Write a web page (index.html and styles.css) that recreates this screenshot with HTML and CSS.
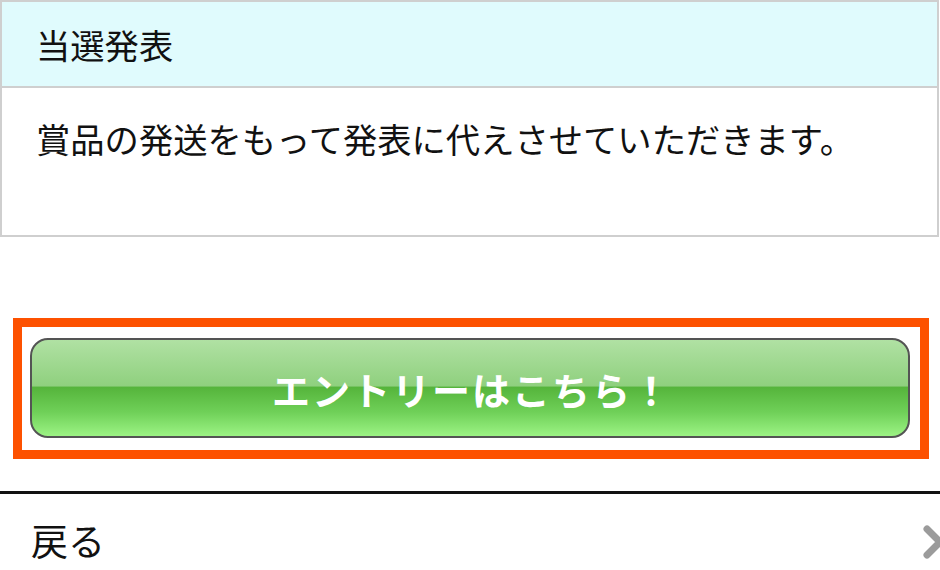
FILE: index.html
```html
<!DOCTYPE html>
<html lang="ja">
<head>
    <meta charset="UTF-8">
    <meta name="viewport" content="width=device-width, initial-scale=1.0">
    <title>当選発表</title>
    <link rel="stylesheet" href="styles.css">
</head>
<body>
    <div class="page">
        <!-- 当選発表 -->
        <div class="info-box">
            <div class="info-head">当選発表</div>
            <div class="info-body">賞品の発送をもって発表に代えさせていただきます。</div>
        </div>

        <!-- Entry button -->
        <div class="entry-frame">
            <a class="entry-btn" href="#">エントリーはこちら！</a>
        </div>

        <!-- Back link -->
        <a class="back-row" href="#">
            <span class="back-label">戻る</span>
            <svg class="chevron" width="24" height="34" viewBox="0 0 24 34">
                <polyline points="5,4 18,17 5,30" fill="none" stroke="#9b9b9b" stroke-width="7" stroke-linecap="round" stroke-linejoin="round"/>
            </svg>
        </a>
    </div>
</body>
</html>
```

FILE: styles.css
```css
* { box-sizing: border-box; margin: 0; padding: 0; }
body { font-family: "Noto Sans CJK JP", "Noto Sans", sans-serif; background: #fff; color: #111; width: 940px; overflow: hidden; }
.page { display: flex; flex-direction: column; }
.info-box { width: 939px; border: 2px solid #cfcfcf; }
.info-head { height: 86px; line-height: 84px; padding-left: 34px; background: #e0fbfd; border-bottom: 2px solid #cfcfcf; font-size: 34.3px; font-weight: 400; }
.info-body { height: 147px; padding: 26px 34px 0; line-height: 48px; font-size: 34.3px; }
.entry-frame { margin: 81px 0 0 13px; width: 916px; height: 141px; border: 9px solid #fd5100; padding: 11px 10px 12px 8px; background: #fff; }
.entry-btn { display: flex; align-items: center; justify-content: center; height: 100%; padding-left: 4px; border: 2px solid #545454; border-radius: 18px; color: #fff; text-decoration: none; font-size: 38px; font-weight: 700; letter-spacing: 2px; background: linear-gradient(to bottom, #b0e1a3 0%, #8fd07e 48%, #55b43b 49%, #6fd058 75%, #9cf384 100%); }
.back-row { display: flex; align-items: center; justify-content: space-between; margin-top: 32px; border-top: 3px solid #111; height: 96px; padding-left: 31px; color: #111; text-decoration: none; }
.back-label { font-size: 37px; line-height: 1; }
.chevron { margin-right: -6px; margin-top: 2px; }
```
